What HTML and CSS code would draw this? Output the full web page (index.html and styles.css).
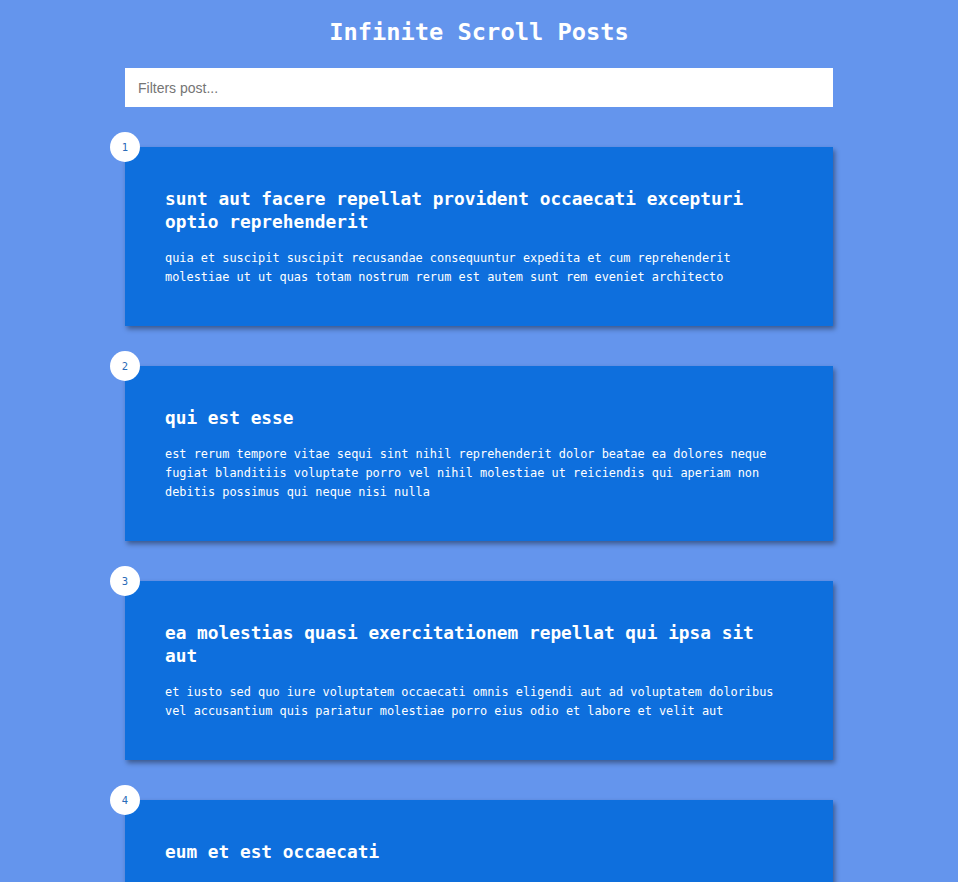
FILE: index.html
```html
<!DOCTYPE html>
<html lang="en">
<head>
<meta charset="UTF-8">
<title>Infinite Scroll Posts</title>
<link rel="stylesheet" href="styles.css">
</head>
<body>
  <div class="container">
    <h1 class="page-title">Infinite Scroll Posts</h1>
    <div class="filter-container">
      <input type="text" class="filter" placeholder="Filters post...">
    </div>
    <div class="posts">
      <div class="post">
        <div class="number">1</div>
        <div class="post-info">
          <h2 class="post-title">sunt aut facere repellat provident occaecati excepturi optio reprehenderit</h2>
          <p class="post-body">quia et suscipit suscipit recusandae consequuntur expedita et cum reprehenderit molestiae ut ut quas totam nostrum rerum est autem sunt rem eveniet architecto</p>
        </div>
      </div>
      <div class="post">
        <div class="number">2</div>
        <div class="post-info">
          <h2 class="post-title">qui est esse</h2>
          <p class="post-body">est rerum tempore vitae sequi sint nihil reprehenderit dolor beatae ea dolores neque fugiat blanditiis voluptate porro vel nihil molestiae ut reiciendis qui aperiam non debitis possimus qui neque nisi nulla</p>
        </div>
      </div>
      <div class="post">
        <div class="number">3</div>
        <div class="post-info">
          <h2 class="post-title">ea molestias quasi exercitationem repellat qui ipsa sit aut</h2>
          <p class="post-body">et iusto sed quo iure voluptatem occaecati omnis eligendi aut ad voluptatem doloribus vel accusantium quis pariatur molestiae porro eius odio et labore et velit aut</p>
        </div>
      </div>
      <div class="post">
        <div class="number">4</div>
        <div class="post-info">
          <h2 class="post-title">eum et est occaecati</h2>
          <p class="post-body">ullam et saepe reiciendis voluptatem adipisci sit amet autem assumenda provident rerum culpa quis hic commodi nesciunt rem tenetur doloremque ipsam iure quis sunt voluptatem rerum illo velit</p>
        </div>
      </div>
    </div>
  </div>
</body>
</html>
```
FILE: styles.css
```css
html, body {
  overflow: hidden;
}
body {
  margin: 0;
  background-color: #6495ed;
  color: #fff;
  font-family: "DejaVu Sans Mono", monospace;
}
.container {
  width: 708px;
  margin: 0 auto;
}
.page-title {
  margin: 17px 0 0;
  font-size: 23.7px;
  line-height: 30px;
  text-align: center;
  font-weight: bold;
}
.filter-container {
  margin-top: 21px;
}
.filter {
  display: block;
  box-sizing: border-box;
  width: 100%;
  height: 39px;
  border: none;
  padding: 0 13px;
  font-family: "Liberation Sans", Arial, sans-serif;
  font-size: 14px;
  background: #fff;
  outline: none;
}
.filter::placeholder {
  color: #757575;
}
.posts {
  padding-top: 40px;
}
.post {
  position: relative;
  background-color: #0e6fdd;
  box-shadow: 2px 3px 5px rgba(0, 0, 0, 0.4);
  padding: 40px 20px 39px;
  margin-bottom: 40px;
  display: flex;
}
.post-info {
  margin: 0 20px;
  width: 628px;
}
.post-title {
  margin: 0;
  font-size: 17.8px;
  line-height: 23px;
  font-weight: bold;
}
.post-body {
  margin: 16px 0 0;
  font-size: 11.9px;
  line-height: 19px;
}
.number {
  position: absolute;
  top: -15px;
  left: -15px;
  width: 30px;
  height: 30px;
  border-radius: 50%;
  background: #fff;
  color: #2a6bb8;
  font-size: 10.5px;
  display: flex;
  align-items: center;
  justify-content: center;
}
```
